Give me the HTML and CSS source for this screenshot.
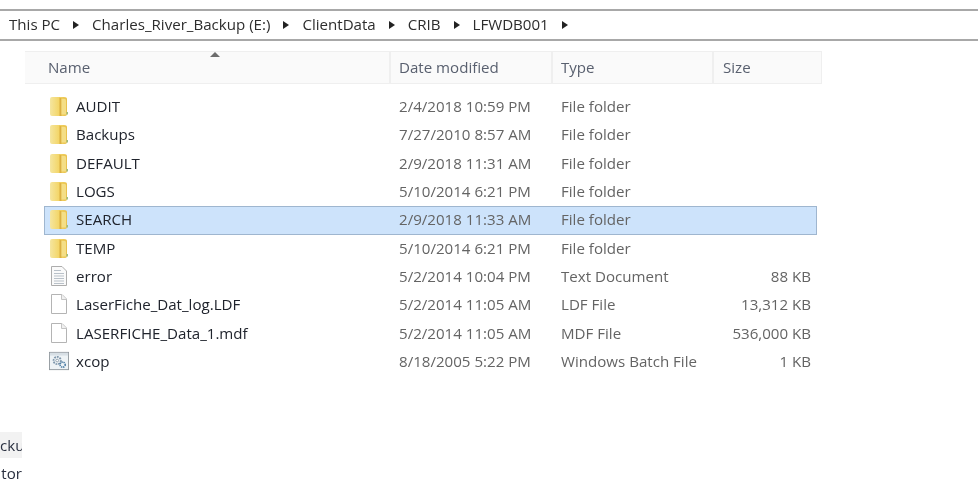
FILE: index.html
```html
<!DOCTYPE html>
<html lang="en">
<head>
<meta charset="utf-8">
<title>LFWDB001</title>
<link rel="stylesheet" href="styles.css">
</head>
<body>
<svg class="defs" width="0" height="0" aria-hidden="true">
  <defs>
    <linearGradient id="fold" x1="0" y1="0" x2="1" y2="0">
      <stop offset="0" stop-color="#f5e6a0"/>
      <stop offset="0.55" stop-color="#f3d566"/>
      <stop offset="1" stop-color="#e8c04c"/>
    </linearGradient>
    <symbol id="folder" viewBox="0 0 20 20">
      <path d="M1 3q0-2 2-2h12q3 0 3 2v15q0 2-2 2H3q-2 0-2-2z" fill="url(#fold)"/>
      <path d="M10.500 1.500l2 1V20h-2z" fill="#dbb043"/>
      <path d="M12.500 3h3.500q1 0 1 1.500v14h-4.500z" fill="#f4de86"/>
      <path d="M17.500 16h1.500v2.500h-1.500z" fill="#9dbb80"/>
    </symbol>
    <symbol id="blank" viewBox="0 0 18 20">
      <path d="M1.500 .5H12L16.500 5v14.500h-15z" fill="#fff" stroke="#b4b4b4"/>
      <path d="M11.500 .5V5.500h5" fill="#f0f0f0" stroke="#c4c4c4"/>
    </symbol>
    <symbol id="text" viewBox="0 0 18 20">
      <path d="M1.500 .5H12L16.500 5v14.500h-15z" fill="#fafafa" stroke="#adadad"/>
      <path d="M4 4.500h7M4 7.500h10M4 10h10M4 12.500h10M4 15h10M4 17.500h10" stroke="#b9c1c9"/>
    </symbol>
    <symbol id="batch" viewBox="0 0 22 20">
      <rect x=".5" y=".5" width="21" height="19" fill="#eef3f6" stroke="#8f979d"/>
      <path d="M1 1h20v3H1z" fill="#d7dfe5"/>
      <circle cx="9" cy="9.500" r="4" fill="none" stroke="#7f97ac" stroke-width="2" stroke-dasharray="2 1"/>
      <circle cx="9" cy="9.500" r="1.500" fill="#fff" stroke="#8a9aa8"/>
      <circle cx="15" cy="14" r="2.800" fill="none" stroke="#4f7fa6" stroke-width="1.800" stroke-dasharray="1.500 .8"/>
    </symbol>
  </defs>
</svg>

<nav class="crumbs">
  <span>This PC</span><i class="tri"></i>
  <span>Charles_River_Backup (E:)</span><i class="tri"></i>
  <span>ClientData</span><i class="tri"></i>
  <span>CRIB</span><i class="tri"></i>
  <span>LFWDB001</span><i class="tri"></i>
</nav>

<main class="list">
  <div class="head">
    <div class="hcell name">Name<i class="sort"></i></div>
    <div class="hcell">Date modified</div>
    <div class="hcell">Type</div>
    <div class="hcell last">Size</div>
  </div>
  <div class="rows">
    <div class="row"><div class="cname"><svg class="ico"><use href="#folder"/></svg><span>AUDIT</span></div><div class="sub">2/4/2018 10:59 PM</div><div class="sub">File folder</div><div class="size"></div></div>
    <div class="row"><div class="cname"><svg class="ico"><use href="#folder"/></svg><span>Backups</span></div><div class="sub">7/27/2010 8:57 AM</div><div class="sub">File folder</div><div class="size"></div></div>
    <div class="row"><div class="cname"><svg class="ico"><use href="#folder"/></svg><span>DEFAULT</span></div><div class="sub">2/9/2018 11:31 AM</div><div class="sub">File folder</div><div class="size"></div></div>
    <div class="row"><div class="cname"><svg class="ico"><use href="#folder"/></svg><span>LOGS</span></div><div class="sub">5/10/2014 6:21 PM</div><div class="sub">File folder</div><div class="size"></div></div>
    <div class="row selected"><div class="cname"><svg class="ico"><use href="#folder"/></svg><span>SEARCH</span></div><div class="sub">2/9/2018 11:33 AM</div><div class="sub">File folder</div><div class="size"></div></div>
    <div class="row"><div class="cname"><svg class="ico"><use href="#folder"/></svg><span>TEMP</span></div><div class="sub">5/10/2014 6:21 PM</div><div class="sub">File folder</div><div class="size"></div></div>
    <div class="row"><div class="cname"><svg class="ico"><use href="#text"/></svg><span>error</span></div><div class="sub">5/2/2014 10:04 PM</div><div class="sub">Text Document</div><div class="size">88 KB</div></div>
    <div class="row"><div class="cname"><svg class="ico"><use href="#blank"/></svg><span>LaserFiche_Dat_log.LDF</span></div><div class="sub">5/2/2014 11:05 AM</div><div class="sub">LDF File</div><div class="size">13,312 KB</div></div>
    <div class="row"><div class="cname"><svg class="ico"><use href="#blank"/></svg><span>LASERFICHE_Data_1.mdf</span></div><div class="sub">5/2/2014 11:05 AM</div><div class="sub">MDF File</div><div class="size">536,000 KB</div></div>
    <div class="row"><div class="cname"><svg class="ico"><use href="#batch"/></svg><span>xcop</span></div><div class="sub">8/18/2005 5:22 PM</div><div class="sub">Windows Batch File</div><div class="size">1 KB</div></div>
  </div>
</main>

<aside class="stub">
  <div class="stub-a">cku</div>
  <div class="stub-b">tor</div>
</aside>
</body>
</html>
```

FILE: styles.css
```css
* { box-sizing: border-box; }
html, body { margin: 0; height: 100%; overflow: hidden; background: #fff; }
body {
  width: 978px;
  height: 480px;
  padding-top: 9px;
  font-family: "Open Sans", "Noto Sans", sans-serif;
  font-size: 15.100px;
  color: #2a2a2a;
  position: relative;
  filter: blur(0.35px);
}
.defs { position: absolute; }
.crumbs {
  height: 32px;
  border-top: 2px solid #a8a8a8;
  border-bottom: 2px solid #a8a8a8;
  padding: 0 0 3px 9px;
  display: flex;
  align-items: center;
  color: #2d2d2d;
}
.tri {
  width: 0;
  height: 0;
  margin: 3px 13px 0 13px;
  border-left: 6px solid #222;
  border-top: 4px solid transparent;
  border-bottom: 4px solid transparent;
}
.list { margin: 10px 0 0 25px; width: 797px; }
.head {
  display: grid;
  grid-template-columns: 366px 162px 161px 108px;
  height: 33px;
  background: #fafafa;
  border: 1px solid #efefef;
  border-left: 0;
}
.hcell {
  padding-left: 8px;
  line-height: 31px;
  color: #59606f;
  border-right: 2px solid #efefef;
}
.hcell.last { border-right: 0; padding-left: 9px; }
.hcell.name { padding-left: 23px; position: relative; }
.sort {
  position: absolute;
  left: 185px;
  top: 0;
  width: 0;
  height: 0;
  border-left: 5px solid transparent;
  border-right: 5px solid transparent;
  border-bottom: 5px solid #6d6d6d;
}
.rows { margin-top: 9px; }
.row {
  display: grid;
  grid-template-columns: 354px 162px 161px 89px;
  height: 28.330px;
  margin-left: 19px;
  width: 773px;
  align-items: center;
  border: 1px solid transparent;
}
.row > div { padding-bottom: 2px; }
.row.selected {
  background: #cde3fb;
  border-color: #9fb6cf;
}
.cname {
  display: flex;
  align-items: center;
  gap: 7px;
  padding-left: 4px;
  color: #20242d;
  white-space: nowrap;
}
.ico { width: 20px; height: 20px; flex: none; }
.sub { color: #646464; white-space: nowrap; }
.size { color: #646464; text-align: right; white-space: nowrap; }
.stub {
  position: absolute;
  left: 0;
  top: 432px;
  width: 22px;
  color: #2a3040;
  overflow: hidden;
}
.stub-a {
  height: 26px;
  line-height: 26px;
  background: #f2f2f2;
  text-align: right;
}
.stub-b {
  height: 30px;
  line-height: 30px;
  text-align: right;
}
```
